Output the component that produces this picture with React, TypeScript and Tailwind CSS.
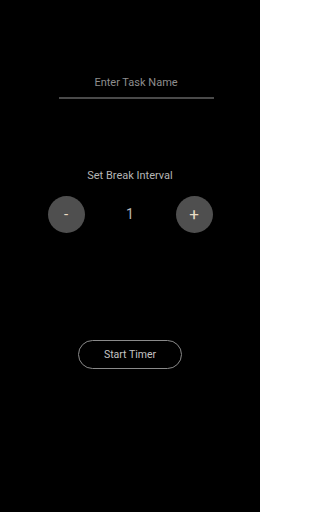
const App = () => {
  return (
    <div className="w-[260px] h-[512px] bg-black flex flex-col items-center font-['Roboto',sans-serif]">
      <div className="mt-[75px] ml-[12px] w-[155px] flex flex-col items-center">
        <input
          placeholder="Enter Task Name"
          className="w-full bg-transparent text-center text-[11px] text-[#9a9a9a] placeholder:text-[#8e8e8e] outline-none pb-[5px] border-b-2 border-[#4a4a4a]"
        />
      </div>

      <span className="mt-[69px] text-[11px] text-[#b5b5b5]">Set Break Interval</span>

      <div className="mt-[12px] w-[165px] flex items-center justify-between">
        <button className="w-[37px] h-[37px] rounded-full bg-[#4f4f4f] text-[#e9dcc4] text-[15px] flex items-center justify-center">
          -
        </button>
        <span className="text-[14px] text-[#b8b8b8]">1</span>
        <button className="w-[37px] h-[37px] rounded-full bg-[#4f4f4f] text-[#e9dcc4] text-[17px] flex items-center justify-center">
          +
        </button>
      </div>

      <button className="mt-[107px] w-[104px] h-[29px] rounded-full border border-[#8a8a8a] text-[10.5px] text-[#c4c4c4]">
        Start Timer
      </button>
    </div>
  );
};

export default App;
